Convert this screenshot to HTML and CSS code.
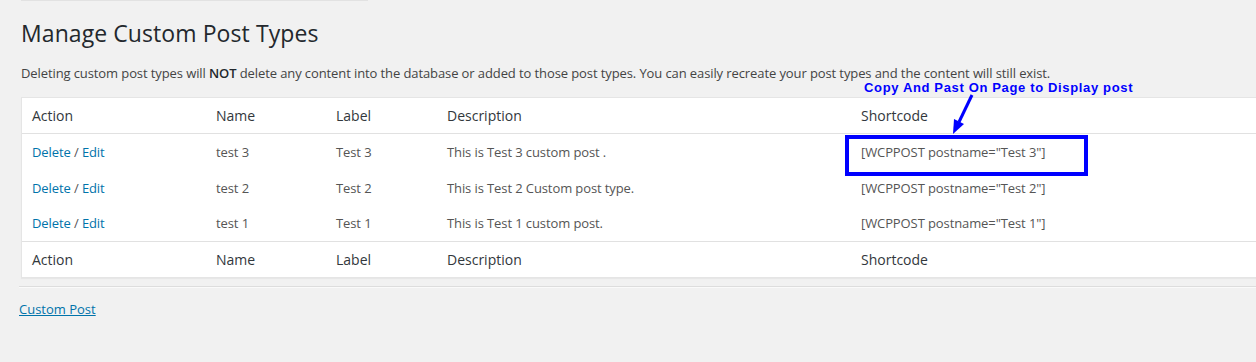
FILE: index.html
```html
<!DOCTYPE html>
<html lang="en">
<head>
    <meta charset="UTF-8">
    <title>Manage Custom Post Types</title>
    <link rel="stylesheet" href="styles.css">
</head>
<body>
    <div class="page">
        <div class="top-rule"></div>

        <h1 class="page-title">Manage Custom Post Types</h1>

        <p class="page-note">
            Deleting custom post types will <strong>NOT</strong> delete any content into the database or added to those post types. You can easily recreate your post types and the content will still exist.
        </p>

        <table class="cpt-table">
            <colgroup>
                <col class="col-action">
                <col class="col-name">
                <col class="col-label">
                <col class="col-desc">
                <col>
            </colgroup>
            <thead>
                <tr>
                    <th>Action</th>
                    <th>Name</th>
                    <th>Label</th>
                    <th>Description</th>
                    <th>Shortcode</th>
                </tr>
            </thead>
            <tbody>
                <tr>
                    <td><a href="#">Delete</a> / <a href="#">Edit</a></td>
                    <td>test 3</td>
                    <td>Test 3</td>
                    <td>This is Test 3 custom post .</td>
                    <td>[WCPPOST postname="Test 3"]</td>
                </tr>
                <tr>
                    <td><a href="#">Delete</a> / <a href="#">Edit</a></td>
                    <td>test 2</td>
                    <td>Test 2</td>
                    <td>This is Test 2 Custom post type.</td>
                    <td>[WCPPOST postname="Test 2"]</td>
                </tr>
                <tr>
                    <td><a href="#">Delete</a> / <a href="#">Edit</a></td>
                    <td>test 1</td>
                    <td>Test 1</td>
                    <td>This is Test 1 custom post.</td>
                    <td>[WCPPOST postname="Test 1"]</td>
                </tr>
            </tbody>
            <tfoot>
                <tr>
                    <th>Action</th>
                    <th>Name</th>
                    <th>Label</th>
                    <th>Description</th>
                    <th>Shortcode</th>
                </tr>
            </tfoot>
        </table>

        <hr class="divider">

        <p class="back-link"><a href="#">Custom Post</a></p>

        <!-- annotation drawn over the screenshot -->
        <div class="note-text">Copy And Past On Page to Display post</div>
        <svg class="note-arrow" width="35" height="50" viewBox="0 0 35 50">
            <line x1="27" y1="5" x2="14" y2="32" stroke="#0000ff" stroke-width="3"/>
            <polygon points="8,44 19,34 9,29" fill="#0000ff"/>
        </svg>
        <div class="note-box"></div>
    </div>
</body>
</html>
```

FILE: styles.css
```css
* {
    box-sizing: border-box;
}

html,
body {
    margin: 0;
    padding: 0;
    overflow: hidden;
}

body {
    background: #f1f1f1;
    color: #444;
    font-family: "Open Sans", "Liberation Sans", sans-serif;
    font-size: 13px;
    line-height: 1.5;
}

a {
    color: #0073aa;
    text-decoration: none;
}

.page {
    position: relative;
    padding-left: 19px;
    min-height: 362px;
}

.top-rule {
    width: 347px;
    height: 1px;
    margin-left: 2px;
    background: #e2e2e2;
}

.page-title {
    margin: 18px 0 0 2px;
    font-size: 23px;
    font-weight: 400;
    line-height: 29px;
    letter-spacing: 0.08px;
    color: #23282d;
}

.page-note {
    margin: 16px 0 13px 2px;
    letter-spacing: -0.1px;
}

.page-note strong {
    font-weight: 600;
    color: #23282d;
}

.cpt-table {
    width: 1260px;
    margin-left: 2px;
    table-layout: fixed;
    border-spacing: 0;
    background: #fff;
    border: 1px solid #e5e5e5;
    box-shadow: 0 1px 1px rgba(0, 0, 0, 0.04);
}

.col-action { width: 184px; }
.col-name { width: 120px; }
.col-label { width: 111px; }
.col-desc { width: 414px; }

.cpt-table th {
    padding: 8px 10px;
    font-size: 14px;
    font-weight: 400;
    line-height: 1.4em;
    text-align: left;
    color: #32373c;
}

.cpt-table thead th {
    border-bottom: 1px solid #e1e1e1;
}

.cpt-table tfoot th {
    border-top: 1px solid #e1e1e1;
}

.cpt-table td {
    padding: 9px 10px 7px;
    font-size: 13px;
    line-height: 1.5em;
    letter-spacing: -0.1px;
    color: #555;
}

.divider {
    margin: 8px 0 0;
    border: 0;
    border-top: 1px solid #ddd;
    border-bottom: 1px solid #fafafa;
}

.back-link {
    margin: 12px 0 0;
}

.back-link a {
    text-decoration: underline;
}

/* blue markup on top of the table */
.note-text {
    position: absolute;
    left: 864px;
    top: 80px;
    font-family: "Liberation Sans", Arial, sans-serif;
    font-size: 13px;
    font-weight: 700;
    line-height: 15px;
    letter-spacing: 0.65px;
    color: #0000ff;
    white-space: nowrap;
}

.note-arrow {
    position: absolute;
    left: 945px;
    top: 90px;
}

.note-box {
    position: absolute;
    left: 845px;
    top: 135px;
    width: 243px;
    height: 41px;
    border: 4px solid #0000ff;
}
```
